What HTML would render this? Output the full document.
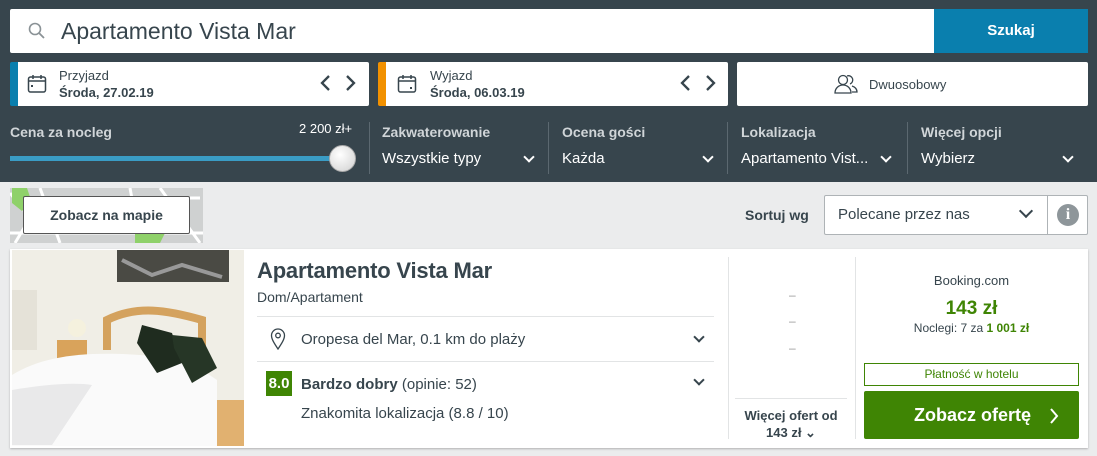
<!DOCTYPE html><html><head><meta charset="utf-8"><style>
*{box-sizing:border-box;margin:0;padding:0}
body{width:1097px;height:456px;overflow:hidden;font-family:"Liberation Sans",sans-serif;background:#ebeced;position:relative;color:#37454d}
.a{position:absolute}
.hdr{left:0;top:0;width:1097px;height:182px;background:#37454d}
.w{background:#fff;border-radius:2px}
.lbl{color:#d0d5d8;font-weight:bold;font-size:14px}
.val{color:#fff;font-size:15px}
.sep{width:1px;background:#5b6870;top:122px;height:52px}
.chev{width:8px;height:8px;border-right:2px solid #fff;border-bottom:2px solid #fff;transform:rotate(45deg)}
</style></head><body>
<div class="a hdr"></div>
<div class="a w" style="left:10px;top:9px;width:1078px;height:44px"></div>
<svg class="a" style="left:28px;top:22px" width="18" height="18" viewBox="0 0 18 18"><circle cx="7" cy="7" r="5.5" fill="none" stroke="#8a9296" stroke-width="1.6"/><path d="M11 11l5 5" stroke="#8a9296" stroke-width="1.8"/></svg>
<div class="a" style="left:61px;top:18px;font-size:23px;color:#37454d">Apartamento Vista Mar</div>
<div class="a" style="left:934px;top:9px;width:154px;height:44px;background:#0a7fae;color:#fff;font-weight:bold;font-size:15px;text-align:center;line-height:44px">Szukaj</div>

<div class="a w" style="left:10px;top:62px;width:359px;height:44px;border-left:8px solid #0a7fae"></div>
<div class="a w" style="left:378px;top:62px;width:350px;height:44px;border-left:8px solid #f29100"></div>
<div class="a w" style="left:737px;top:62px;width:351px;height:44px"></div>
<svg class="a" style="left:27px;top:74px" width="20" height="20" viewBox="0 0 20 20"><rect x="1.5" y="3" width="17" height="15" rx="2" fill="none" stroke="#37454d" stroke-width="1.5"/><path d="M1.5 7h17M6 1v4M14 1v4" stroke="#37454d" stroke-width="1.5"/><rect x="4" y="11" width="2" height="2" fill="#37454d"/></svg>
<svg class="a" style="left:397px;top:74px" width="20" height="20" viewBox="0 0 20 20"><rect x="1.5" y="3" width="17" height="15" rx="2" fill="none" stroke="#37454d" stroke-width="1.5"/><path d="M1.5 7h17M6 1v4M14 1v4" stroke="#37454d" stroke-width="1.5"/><rect x="13" y="13" width="2" height="2" fill="#37454d"/></svg>
<div class="a" style="left:59px;top:68px;font-size:13px">Przyjazd</div>
<div class="a" style="left:59px;top:85px;font-size:13px;font-weight:bold">Środa, 27.02.19</div>
<div class="a" style="left:430px;top:68px;font-size:13px">Wyjazd</div>
<div class="a" style="left:430px;top:85px;font-size:13px;font-weight:bold">Środa, 06.03.19</div>
<svg class="a" style="left:320px;top:75px" width="36" height="16"><path d="M9 1L2 8l7 7M27 1l7 7-7 7" fill="none" stroke="#37454d" stroke-width="2.3"/></svg>
<svg class="a" style="left:680px;top:75px" width="36" height="16"><path d="M9 1L2 8l7 7M27 1l7 7-7 7" fill="none" stroke="#37454d" stroke-width="2.3"/></svg>
<svg class="a" style="left:834px;top:73px" width="24" height="22" viewBox="0 0 24 22"><circle cx="9" cy="7" r="4.5" fill="none" stroke="#37454d" stroke-width="1.3"/><path d="M1 20c0-5 4-8 8-8s8 3 8 8z" fill="none" stroke="#37454d" stroke-width="1.3"/><path d="M13 3a4 4 0 1 1 3 8M18 13c3 1 5 3 5 6h-5" fill="none" stroke="#37454d" stroke-width="1.3"/></svg>
<div class="a" style="left:869px;top:77px;font-size:13px">Dwuosobowy</div>

<div class="a lbl" style="left:10px;top:124px">Cena za nocleg</div>
<div class="a" style="left:299px;top:121px;color:#fff;font-size:13px">2 200 zł+</div>
<div class="a" style="left:10px;top:156px;width:330px;height:5px;background:#3a9cc5"></div>
<div class="a" style="left:329px;top:145px;width:27px;height:27px;border-radius:50%;background:radial-gradient(circle at 40% 35%,#fff,#d0d0d0);border:1px solid #aaa"></div>
<div class="a sep" style="left:369px"></div><div class="a sep" style="left:548px"></div><div class="a sep" style="left:727px"></div><div class="a sep" style="left:907px"></div>
<div class="a lbl" style="left:382px;top:124px">Zakwaterowanie</div><div class="a val" style="left:382px;top:150px">Wszystkie typy</div><div class="a chev" style="left:525px;top:153px"></div>
<div class="a lbl" style="left:562px;top:124px">Ocena gości</div><div class="a val" style="left:562px;top:150px">Każda</div><div class="a chev" style="left:704px;top:153px"></div>
<div class="a lbl" style="left:741px;top:124px">Lokalizacja</div><div class="a val" style="left:741px;top:150px">Apartamento Vist...</div><div class="a chev" style="left:882px;top:153px"></div>
<div class="a lbl" style="left:921px;top:124px">Więcej opcji</div><div class="a val" style="left:921px;top:150px">Wybierz</div><div class="a chev" style="left:1064px;top:153px"></div>

<svg class="a" style="left:10px;top:188px" width="193" height="55"><rect width="193" height="55" fill="#cfd1d1"/><path d="M0 5L20 30 5 55M30 0l20 55M120 0l10 55M150 0l40 55M0 45h193M60 10h130" stroke="#fff" stroke-width="3" fill="none"/><path d="M2 0h15l5 15-10 8-10-8z" fill="#8fd16a"/><path d="M125 45h30l-5 10h-25z" fill="#8fd16a"/></svg>
<div class="a" style="left:23px;top:196px;width:167px;height:38px;background:#fff;border:1px solid #555;border-radius:2px;font-weight:bold;font-size:14px;text-align:center;line-height:36px">Zobacz na mapie</div>
<div class="a" style="left:745px;top:207px;font-weight:bold;font-size:14px">Sortuj wg</div>
<div class="a" style="left:824px;top:195px;width:264px;height:40px;background:#fff;border:1px solid #aeb3b6;border-radius:2px"></div>
<div class="a" style="left:1047px;top:195px;width:1px;height:40px;background:#aeb3b6"></div>
<div class="a" style="left:838px;top:206px;font-size:15px">Polecane przez nas</div>
<div class="a chev" style="left:1021px;top:206px;border-color:#37454d;width:10px;height:10px"></div>
<div class="a" style="left:1057px;top:204px;width:22px;height:22px;border-radius:50%;background:#8e969a;color:#fff;font-weight:bold;font-size:16px;text-align:center;line-height:22px;font-family:'Liberation Serif',serif">i</div>

<div class="a" style="left:10px;top:249px;width:1078px;height:199px;background:#fff;box-shadow:0 1px 2px rgba(0,0,0,.25)"></div>
<svg class="a" style="left:12px;top:250px" width="232" height="196" viewBox="0 0 232 196"><rect width="232" height="196" fill="#f0eee6"/><rect x="105" y="0" width="112" height="32" fill="#4a4a44"/><path d="M110 10l30 15 30-10 40 12" stroke="#999" stroke-width="4" fill="none"/><rect x="45" y="90" width="30" height="25" fill="#d9a35b"/><rect x="195" y="150" width="37" height="46" fill="#e1b170"/><path d="M95 100V70c30-15 60-10 95 0v60" fill="none" stroke="#d4a25e" stroke-width="8"/><path d="M0 196V125c40-25 100-25 175-15l30 20v66z" fill="#fafafa"/><path d="M0 140c30-5 60-8 80-5l-40 60H0z" fill="#e9e9ea"/><path d="M130 75l30 8 10 30-25 10-20-30z" fill="#1f2c1f"/><path d="M160 85l30 3 15 30-25 15-18-35z" fill="#263626"/><circle cx="65" cy="78" r="9" fill="#f5f1de"/><rect x="0" y="40" width="25" height="60" fill="#e5e2d8"/></svg>
<div class="a" style="left:257px;top:258px;font-size:22px;font-weight:bold;letter-spacing:-.2px">Apartamento Vista Mar</div>
<div class="a" style="left:257px;top:289px;font-size:14px">Dom/Apartament</div>
<div class="a" style="left:257px;top:316px;width:457px;height:1px;background:#e2e4e5"></div>
<div class="a" style="left:257px;top:361px;width:457px;height:1px;background:#e2e4e5"></div>
<svg class="a" style="left:270px;top:328px" width="16" height="22" viewBox="0 0 16 22"><path d="M8 21C4 15 1.5 11 1.5 7.5a6.5 6.5 0 0 1 13 0C14.5 11 12 15 8 21z" fill="none" stroke="#37454d" stroke-width="1.3"/><circle cx="8" cy="7.5" r="2.3" fill="none" stroke="#37454d" stroke-width="1.3"/></svg>
<div class="a" style="left:301px;top:331px;font-size:15px">Oropesa del Mar, 0.1 km do plaży</div>
<div class="a chev" style="left:695px;top:333px;border-color:#37454d;width:8px;height:8px"></div>
<div class="a" style="left:266px;top:371px;width:26px;height:25px;background:#3f8504;color:#fff;font-weight:bold;font-size:15px;text-align:center;line-height:25px">8.0</div>
<div class="a" style="left:301px;top:376px;font-size:15px"><b>Bardzo dobry</b> (opinie: 52)</div>
<div class="a chev" style="left:695px;top:376px;border-color:#37454d;width:8px;height:8px"></div>
<div class="a" style="left:301px;top:405px;font-size:15px">Znakomita lokalizacja (8.8 / 10)</div>
<div class="a" style="left:728px;top:257px;width:1px;height:182px;background:#e2e4e5"></div>
<div class="a" style="left:855px;top:257px;width:1px;height:182px;background:#e2e4e5"></div>
<div class="a" style="left:789px;top:288px;font-size:12px;color:#999">–</div>
<div class="a" style="left:789px;top:314px;font-size:12px;color:#999">–</div>
<div class="a" style="left:789px;top:341px;font-size:12px;color:#999">–</div>
<div class="a" style="left:735px;top:398px;width:112px;height:1px;background:#e2e4e5"></div>
<div class="a" style="left:735px;top:407px;width:112px;text-align:center;font-size:13px;font-weight:bold;line-height:17px">Więcej ofert od<br>143 zł ⌄</div>
<div class="a" style="left:864px;top:273px;width:215px;text-align:center;font-size:13px">Booking.com</div>
<div class="a" style="left:864px;top:298px;width:215px;text-align:center;font-size:19px;font-weight:bold;color:#3f8504">143 zł</div>
<div class="a" style="left:864px;top:321px;width:215px;text-align:center;font-size:12px">Noclegi: 7 za <b style="color:#3f8504">1 001 zł</b></div>
<div class="a" style="left:864px;top:363px;width:215px;height:23px;border:1px solid #3f8504;text-align:center;font-size:12px;line-height:21px;color:#3f8504">Płatność w hotelu</div>
<div class="a" style="left:864px;top:391px;width:215px;height:48px;background:#3f8504;border-radius:2px;color:#fff;font-weight:bold;font-size:18px;line-height:48px;padding-left:50px">Zobacz ofertę</div>
<svg class="a" style="left:1049px;top:408px" width="10" height="16"><path d="M2 1l6 7-6 7" fill="none" stroke="#fff" stroke-width="2"/></svg>
</body></html>
